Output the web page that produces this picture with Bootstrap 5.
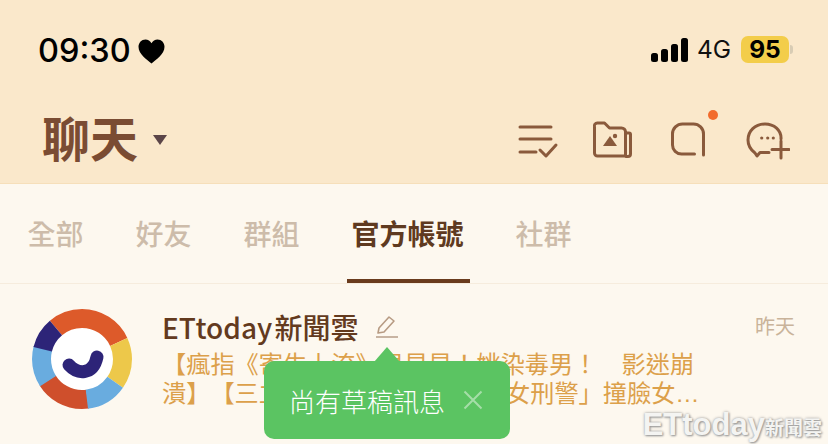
<!DOCTYPE html>
<html lang="zh-Hant">

<head>
    <meta charset="UTF-8">
    <meta name="viewport" content="width=device-width, initial-scale=1.0">
    <title>聊天</title>
    <link href="https://cdn.jsdelivr.net/npm/bootstrap@5.3.0/dist/css/bootstrap.min.css" rel="stylesheet">
    <style>
        body {
            width: 828px;
            height: 444px;
            overflow: hidden;
            background-color: #fdf8ef;
            font-family: "Noto Sans CJK TC", "Liberation Sans", sans-serif;
        }

        .phone-page {
            position: relative;
            height: 444px;
            overflow: hidden;
        }

        .top-area {
            height: 184px;
            background-color: #fae8cb;
            border-bottom: 1px solid #f6dfba;
        }

        .status-row {
            height: 100px;
            padding: 0 35px 0 38px;
        }

        .status-left {
            margin-top: 3px;
        }

        .status-right {
            margin-top: -1px;
        }

        .clock-text {
            font-family: Inter, "Liberation Sans", sans-serif;
            font-size: 32.5px;
            font-weight: 500;
            color: #000;
            line-height: 1;
        }

        .heart-icon {
            margin-left: 7px;
        }

        .net-text {
            margin-left: 9px;
            font-family: Inter, "Liberation Sans", sans-serif;
            font-size: 24.5px;
            color: #111;
            line-height: 1;
        }

        .batt-box {
            width: 48px;
            height: 27px;
            margin-left: 10px;
            background-color: #f3cd4a;
            border-radius: 7px;
            font-family: Inter, "Liberation Sans", sans-serif;
            font-size: 24.5px;
            font-weight: 700;
            color: #000;
            line-height: 1;
        }

        .batt-nub {
            width: 3px;
            height: 9px;
            margin-left: 1px;
            background-color: #d8ccb4;
            border-radius: 0 3px 3px 0;
        }

        .title-row {
            height: 83px;
            padding: 0 38px 0 42px;
        }

        .title-text {
            font-size: 48px;
            font-weight: 700;
            color: #7a4c33;
            line-height: 1;
            margin-top: -4px;
        }

        .title-caret {
            width: 0;
            height: 0;
            margin: 3px 0 0 15px;
            border-left: 7px solid transparent;
            border-right: 7px solid transparent;
            border-top: 10px solid #5b4548;
        }

        .icon-strip {
            gap: 30px;
            margin-top: 8px;
        }

        .icon-stroke {
            fill: none;
            stroke: #8a5a3c;
            stroke-width: 3;
            stroke-linecap: round;
            stroke-linejoin: round;
        }

        .tab-row {
            height: 100px;
            padding-left: 22.5px;
            border-bottom: 1px solid #f6ecdd;
        }

        .tab-item {
            height: 99px;
            padding: 2px 5px 0;
            margin-right: 42px;
            font-size: 28px;
            font-weight: 500;
            color: #cdbcaa;
            border-bottom: 4px solid transparent;
            line-height: 1;
        }

        .tab-item.tab-on {
            padding-right: 6px;
            margin-right: 41px;
            color: #5f3a20;
            font-weight: 700;
            border-bottom-color: #6a3b1d;
        }

        .chat-row {
            padding: 25px 33px 0 32px;
        }

        .chat-body {
            margin-left: 30px;
            padding-top: 2px;
        }

        .name-line {
            margin-bottom: 5px;
        }

        .name-text {
            font-size: 28px;
            font-weight: 500;
            word-spacing: -4px;
            color: #633a1e;
            line-height: 32px;
        }

        .when-text {
            margin-top: -1px;
            font-size: 20px;
            color: #c9b39a;
            line-height: 32px;
        }

        .preview-text {
            width: 540px;
            font-size: 24.2px;
            color: #dca04a;
            line-height: 29px;
            white-space: nowrap;
            text-spacing-trim: space-all;
        }

        .dots-text {
            font-family: "Liberation Sans", sans-serif;
        }

        .draft-toast {
            position: absolute;
            left: 264px;
            top: 361px;
            width: 246px;
            height: 78px;
            background-color: #5bc462;
            border-radius: 10px;
            color: #fff;
            font-size: 26px;
            font-weight: 300;
            padding-left: 25px;
        }

        .draft-toast::before {
            content: "";
            position: absolute;
            left: 110px;
            top: -14px;
            border-left: 13px solid transparent;
            border-right: 13px solid transparent;
            border-bottom: 15px solid #5bc462;
        }

        .close-icon {
            margin-left: 18px;
        }

        .mark-text {
            position: absolute;
            right: 6px;
            bottom: 4px;
            font-family: "Liberation Sans", sans-serif;
            font-weight: 700;
            font-size: 31px;
            line-height: 1;
            color: #f4f4f2;
            text-shadow: 0 0 3px #9a9a9a, 1px 1px 2px #9a9a9a;
        }

        .mark-text span {
            font-family: "Noto Sans CJK TC", sans-serif;
            font-size: 19px;
        }
    </style>
</head>

<body>
    <div class="phone-page">
        <div class="top-area">
            <div class="status-row d-flex justify-content-between align-items-center">
                <div class="status-left d-flex align-items-center">
                    <span class="clock-text">09:30</span>
                    <svg class="heart-icon" width="27" height="25" viewBox="0 0 27 25">
                        <path d="M13.5 24.5C9 20.5 .5 15.5 .5 7.8 .5 3.6 3.6.5 7.4.5c2.6 0 4.9 1.4 6.1 3.7C14.7 1.9 17 .5 19.6.5c3.8 0 6.9 3.1 6.9 7.3 0 7.7-8.5 12.7-13 16.7z" fill="#000" />
                    </svg>
                </div>
                <div class="status-right d-flex align-items-center">
                    <svg width="37" height="24" viewBox="0 0 37 24" fill="#000">
                        <rect x="0" y="15" width="7" height="9" rx="2.5" />
                        <rect x="10" y="11" width="7" height="13" rx="2.5" />
                        <rect x="20" y="6" width="7" height="18" rx="2.5" />
                        <rect x="30" y="0" width="7" height="24" rx="2.5" />
                    </svg>
                    <span class="net-text">4G</span>
                    <div class="batt-box d-flex align-items-center justify-content-center">95</div>
                    <div class="batt-nub"></div>
                </div>
            </div>
            <div class="title-row d-flex justify-content-between align-items-start">
                <div class="d-flex align-items-center pt-3">
                    <span class="title-text">聊天</span>
                    <span class="title-caret"></span>
                </div>
                <div class="icon-strip d-flex">
                    <svg width="44" height="52" viewBox="516 108 44 52">
                        <path class="icon-stroke" stroke-linecap="butt" d="M520 127h31M520 139h31M520 152h16M540 150l6 6 10-11" />
                    </svg>
                    <svg width="44" height="52" viewBox="590 108 44 52">
                        <path class="icon-stroke" d="M594.5 127a3 3 0 0 1 3-4h7l5 5h12a4 4 0 0 1 4 4v24h-28a3 3 0 0 1-3-3zM627 133h2a1.5 1.5 0 0 1 1.5 1.5V154a2.5 2.5 0 0 1-2.5 2.5h-2" />
                        <path d="M603 146l7-10 7 10z" fill="#8a5a3c" />
                        <circle cx="615" cy="136" r="2.2" fill="#8a5a3c" />
                    </svg>
                    <svg width="52" height="52" viewBox="664 108 52 52" overflow="visible">
                        <path class="icon-stroke" stroke-linecap="butt" d="M703.5 155v-21a10 10 0 0 0-10-10h-11a10 10 0 0 0-10 10v11a9 9 0 0 0 9 9h13" />
                        <circle cx="713" cy="115" r="5" fill="#f26b2c" />
                    </svg>
                    <svg width="44" height="52" viewBox="746 108 44 52">
                        <path class="icon-stroke" d="M781 139c.5-9-7-15-16-15-10 0-17 7-17 16 0 6 3 10 7 13l2 3 3-3.5h9" />
                        <path class="icon-stroke" stroke-linecap="butt" d="M772 149.5h17M781 141v17" />
                        <circle cx="761.7" cy="138" r="1.6" fill="#8a5a3c" />
                        <circle cx="767.7" cy="138" r="1.6" fill="#8a5a3c" />
                        <circle cx="773.3" cy="138" r="1.6" fill="#8a5a3c" />
                    </svg>
                </div>
            </div>
        </div>

        <div class="tab-row d-flex align-items-stretch">
            <div class="tab-item d-flex align-items-center">全部</div>
            <div class="tab-item d-flex align-items-center">好友</div>
            <div class="tab-item d-flex align-items-center">群組</div>
            <div class="tab-item tab-on d-flex align-items-center">官方帳號</div>
            <div class="tab-item d-flex align-items-center">社群</div>
        </div>

        <div class="chat-row d-flex align-items-start">
            <svg width="100" height="100" viewBox="0 0 100 100" class="flex-shrink-0">
                <circle cx="50" cy="50" r="50" fill="#fff" />
                <g fill="none" stroke-width="19" transform="rotate(-90 50 50)">
                    <circle cx="50" cy="50" r="40.5" pathLength="360" stroke="#dd5a2a" stroke-dasharray="105 255" stroke-dashoffset="40" />
                    <circle cx="50" cy="50" r="40.5" pathLength="360" stroke="#edc84a" stroke-dasharray="60 300" stroke-dashoffset="-65" />
                    <circle cx="50" cy="50" r="40.5" pathLength="360" stroke="#cf4f2c" stroke-dasharray="66 294" stroke-dashoffset="-172" />
                    <circle cx="50" cy="50" r="40.5" pathLength="360" stroke="#69acdf" stroke-dasharray="48 312" stroke-dashoffset="-125" />
                    <circle cx="50" cy="50" r="40.5" pathLength="360" stroke="#69acdf" stroke-dasharray="48 312" stroke-dashoffset="-237" />
                    <circle cx="50" cy="50" r="40.5" pathLength="360" stroke="#2d2478" stroke-dasharray="36 324" stroke-dashoffset="-284" />
                </g>
                <path d="M37 56c8 9 24 11 28-8" fill="none" stroke="#2d2478" stroke-width="13" stroke-linecap="round" />
            </svg>
            <div class="chat-body flex-grow-1">
                <div class="name-line d-flex justify-content-between">
                    <div class="d-flex align-items-center">
                        <span class="name-text">ETtoday 新聞雲</span>
                        <svg class="ms-3" width="24" height="26" viewBox="0 0 24 26">
                            <path d="M1 23h22" stroke="#c8b4a2" stroke-width="2" />
                            <path d="M3 19l1-5L14 3l5 4-10 11z" fill="none" stroke="#b79b83" stroke-width="1.6" stroke-linejoin="round" />
                        </svg>
                    </div>
                    <span class="when-text">昨天</span>
                </div>
                <div class="preview-text">【瘋指《寄生上流》男星星！姚染毒男！　影迷崩</div>
                <div class="preview-text">潰】【三立八點檔「美麗的霸氣 女刑警」撞臉女<span class="dots-text">…</span></div>
            </div>
        </div>

        <div class="draft-toast d-flex align-items-center">
            <span>尚有草稿訊息</span>
            <svg class="close-icon" width="20" height="20" viewBox="0 0 20 20">
                <path d="M1.5 1.5l17 17M18.5 1.5l-17 17" stroke="#fff" stroke-opacity=".45" stroke-width="2" />
            </svg>
        </div>

        <div class="mark-text">ETtoday<span>新聞雲</span></div>
    </div>

    <script src="https://cdn.jsdelivr.net/npm/bootstrap@5.3.0/dist/js/bootstrap.bundle.min.js"></script>
</body>

</html>
